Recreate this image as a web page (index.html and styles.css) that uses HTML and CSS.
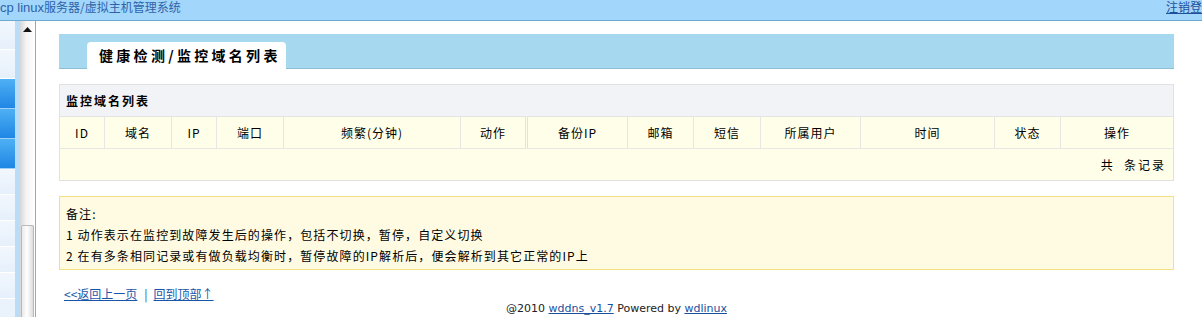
FILE: index.html
```html
<!DOCTYPE html>
<html lang="zh-CN">
<head>
<meta charset="utf-8">
<title>wdcp linux服务器/虚拟主机管理系统</title>
<link rel="stylesheet" href="styles.css">
</head>
<body>
<div class="topbar">
  <span class="sys-title">cp linux<span class="cjk">服务器/虚拟主机管理系统</span></span>
  <a class="logout" href="#">注销登</a>
</div>
<div class="frame">
  <div class="sidebar">
    <div class="mi"></div>
    <div class="mi"></div>
    <div class="mi on"></div>
    <div class="mi on"></div>
    <div class="mi on"></div>
    <div class="mi"></div>
    <div class="mi"></div>
    <div class="mi"></div>
    <div class="mi"></div>
    <div class="mi"></div>
  </div>
  <div class="splitter"></div>
  <div class="scrollbar">
    <div class="sb-arrow"><svg width="9" height="5" viewBox="0 0 9 5"><path d="M0 5 L4.5 0 L9 5 Z" fill="#111"/></svg></div>
    <div class="sb-track"></div>
    <div class="sb-thumb"></div>
  </div>
  <div class="main">
    <div class="strip">
      <div class="tab">健康检测/监控域名列表</div>
    </div>

    <table class="list">
      <colgroup>
        <col class="w45"><col class="w67"><col class="w45"><col class="w67"><col class="w177"><col class="w66"><col class="w101"><col class="w66"><col class="w67"><col class="w100"><col class="w134"><col class="w66"><col class="w113">
      </colgroup>
      <tr class="title-row"><td colspan="13">监控域名列表</td></tr>
      <tr class="head-row">
        <td>ID</td><td>域名</td><td>IP</td><td>端口</td><td>频繁(分钟)</td><td class="dbl">动作</td><td>备份IP</td><td>邮箱</td><td>短信</td><td>所属用户</td><td>时间</td><td>状态</td><td>操作</td>
      </tr>
      <tr class="foot-row"><td colspan="13">共&nbsp; 条记录</td></tr>
    </table>

    <div class="notice">
      <div>备注:</div>
      <div>1 动作表示在监控到故障发生后的操作，包括不切换，暂停，自定义切换</div>
      <div>2 在有多条相同记录或有做负载均衡时，暂停故障的IP解析后，便会解析到其它正常的IP上</div>
    </div>

    <div class="nav"><a href="#">&lt;&lt;返回上一页</a><span class="sep">|</span><a href="#">回到顶部↑</a></div>
    <div class="footer">@2010 <a href="#">wddns_v1.7</a> Powered by <a href="#">wdlinux</a></div>
  </div>
</div>
</body>
</html>
```

FILE: styles.css
```css
html, body {
  margin: 0;
  padding: 0;
  height: 100%;
  overflow: hidden;
}
body {
  font-family: "Liberation Sans", "Noto Sans CJK SC", sans-serif;
  font-size: 12px;
  color: #000;
  background: #fff;
  display: flex;
  flex-direction: column;
}
a { color: #1a4f9c; text-decoration: underline; }

.topbar {
  height: 20px;
  flex: none;
  background: #a2d6fb;
  border-bottom: 1px solid #6ea9d2;
  display: flex;
  justify-content: space-between;
  align-items: flex-start;
  line-height: 13px;
}
.sys-title {
  font-family: "Liberation Sans", "Noto Sans CJK SC", sans-serif;
  font-size: 13px;
  color: #2f62a8;
  white-space: nowrap;
}
.sys-title .cjk {
  font-family: "Noto Sans CJK SC", sans-serif;
  font-size: 12px;
}
.logout {
  font-family: "Noto Sans CJK SC", sans-serif;
  font-size: 12px;
  color: #1d4f9a;
  white-space: nowrap;
}

.frame {
  flex: 1;
  display: flex;
  min-height: 0;
  overflow: hidden;
}
.sidebar {
  width: 15px;
  flex: none;
  display: flex;
  flex-direction: column;
  background: #eaf3fc;
  overflow: hidden;
}
.mi {
  height: 25px;
  flex: none;
  background: linear-gradient(#f2f7fd, #e6f0fb);
  border-bottom: 1px solid #ffffff;
}
.mi:first-child, .mi:nth-child(2) { height: 28px; }
.mi.on {
  height: 29px;
  background: linear-gradient(#4fb0f4, #1f86e4);
  border-bottom: 1px solid #9fd0f6;
}
.splitter {
  width: 5px;
  flex: none;
  background: #b9ddf8;
}
.scrollbar {
  width: 15px;
  flex: none;
  display: flex;
  flex-direction: column;
  background: linear-gradient(90deg, #d6d6d6, #f4f4f4 40%, #ffffff);
  border-right: 1px solid #79b2dc;
}
.sb-arrow {
  height: 16px;
  display: flex;
  justify-content: center;
  align-items: center;
}
.sb-track { height: 188px; }
.sb-thumb {
  flex: 1;
  margin: 0 1px;
  border: 1px solid #b9b9b9;
  border-bottom: none;
  border-radius: 2px 2px 0 0;
  background: linear-gradient(90deg, #e9e9e9, #ffffff 45%, #dcdcdc);
}

.main {
  flex: 1;
  padding: 13px 28px 0 23px;
  display: flex;
  flex-direction: column;
  min-width: 0;
  overflow: hidden;
}

.strip {
  height: 34px;
  flex: none;
  background: #a6d9ef;
  border-bottom: 1px solid #8dbfd7;
  display: flex;
  align-items: flex-end;
}
.tab {
  width: 187px;
  height: 27px;
  margin-left: 28px;
  margin-bottom: -1px;
  padding-left: 12px;
  background: #fff;
  border-radius: 4px 4px 0 0;
  font-family: "Noto Sans CJK SC", sans-serif;
  font-weight: bold;
  font-size: 14px;
  letter-spacing: 3.3px;
  line-height: 27px;
  color: #000;
  white-space: nowrap;
}

.list {
  margin-top: 15px;
  width: 1114px;
  flex: none;
  border-collapse: collapse;
  table-layout: fixed;
  border: 1px solid #e1e1e1;
  font-family: "Noto Sans CJK SC", sans-serif;
  font-size: 12px;
}
.w45 { width: 45px; }
.w66 { width: 66px; }
.w67 { width: 67px; }
.w100 { width: 100px; }
.w101 { width: 101px; }
.w113 { width: 113px; }
.w134 { width: 134px; }
.w177 { width: 177px; }
.list td { padding: 0; }
.title-row td {
  height: 31px;
  background: #f2f3f6;
  border-bottom: 1px solid #e3e3e3;
  padding-left: 6px;
  font-weight: bold;
  letter-spacing: 2px;
}
.head-row td {
  height: 31px;
  background: #fffee9;
  border-right: 1px solid #e6e6e2;
  border-bottom: 1px solid #e6e6e2;
  text-align: center;
  letter-spacing: 1px;
}
.head-row td.dbl { border-right: 3px double #e2e2de; }
.head-row td:last-child { border-right: none; }
.foot-row td {
  height: 31px;
  background: #fffee9;
  text-align: right;
  padding-right: 7px;
  letter-spacing: 2px;
}

.notice {
  margin-top: 15px;
  height: 62px;
  flex: none;
  padding: 6px 6px 4px 6px;
  background: #fffbe2;
  border: 1px solid #f3df86;
  line-height: 21px;
  font-family: "Noto Sans CJK SC", sans-serif;
  font-size: 12px;
  letter-spacing: 1.1px;
}

.nav {
  margin-top: 17px;
  padding-left: 5px;
  line-height: 14px;
  font-family: "Noto Sans CJK SC", sans-serif;
  font-size: 12px;
}
.nav a { color: #1a56a8; }
.nav .sep { color: #1a56a8; margin: 0 6px 0 7px; }

.footer {
  margin-top: 1px;
  text-align: center;
  line-height: 14px;
  font-family: "DejaVu Sans", sans-serif;
  font-size: 11px;
  color: #222;
}
.footer a { color: #1a4f9c; }
```
